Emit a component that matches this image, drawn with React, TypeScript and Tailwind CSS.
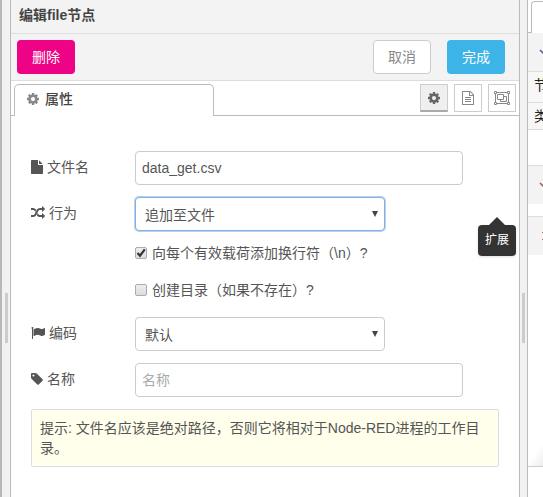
import type { ReactNode } from "react";

const COG =
  "M1152 896q0-106-75-181t-181-75-181 75-75 181 75 181 181 75 181-75 75-181zm512-109v222q0 12-8 23t-20 13l-185 28q-19 54-39 91 35 50 107 138 10 12 10 25t-9 23q-27 37-99 108t-94 71q-12 0-26-9l-138-108q-44 23-91 38-16 136-29 186-7 28-36 28h-222q-14 0-24.5-8.5t-11.5-21.5l-28-184q-49-16-90-37l-141 107q-10 9-25 9-14 0-25-11-126-114-165-168-7-10-7-23 0-12 8-23 15-21 51-66.5t54-70.5q-27-50-41-99l-183-27q-13-2-21-12.5t-8-23.5v-222q0-12 8-23t19-13l186-28q14-46 39-92-40-57-107-138-10-12-10-24 0-10 9-23 26-36 98.5-107.5t94.5-71.5q13 0 26 10l138 107q44-23 91-38 16-136 29-186 7-28 36-28h222q14 0 24.5 8.5t11.5 21.5l28 184q49 16 90 37l142-107q9-9 24-9 13 0 25 10 129 119 165 170 7 8 7 22 0 12-8 23-15 21-51 66.5t-54 70.5q26 50 41 98l183 28q13 2 21 12.5t8 23.5z";
const FILE =
  "M1152 512v-472q22 14 36 28l408 408q14 14 28 36h-472zm-128 32q0 40 28 68t68 28h544v1056q0 40-28 68t-68 28h-1344q-40 0-68-28t-28-68v-1600q0-40 28-68t68-28h800v544z";
const FILE_TEXT =
  "M1596 380q28 28 48 76t20 88v1152q0 40-28 68t-68 28h-1344q-40 0-68-28t-28-68v-1600q0-40 28-68t68-28h896q40 0 88 20t76 48zm-444-244v376h376q-10-29-22-41l-313-313q-12-12-41-22zm384 1528v-1024h-416q-40 0-68-28t-28-68v-416h-768v1536h1280zm-1024-864q0-14 9-23t23-9h704q14 0 23 9t9 23v64q0 14-9 23t-23 9h-704q-14 0-23-9t-9-23v-64zm736 224q14 0 23 9t9 23v64q0 14-9 23t-23 9h-704q-14 0-23-9t-9-23v-64q0-14 9-23t23-9h704zm0 256q14 0 23 9t9 23v64q0 14-9 23t-23 9h-704q-14 0-23-9t-9-23v-64q0-14 9-23t23-9h704z";
const RANDOM =
  "M666 481q-60 92-137 273-22-45-37-72.5t-40.5-63.5-51-56.5-63-35-81.5-14.5h-224q-14 0-23-9t-9-23v-192q0-14 9-23t23-9h224q250 0 410 225zm1126 799q0 14-9 23l-320 320q-9 9-23 9-13 0-22.5-9.5t-9.5-22.5v-192q-32 0-85 .5t-81 1-73-1-71-5-64-10.5-63-18.5-58-28.5-59-40-55-53.5-56-69.5q59-93 136-273 22 45 37 72.5t40.5 63.5 51 56.5 63 35 81.5 14.5h256v-192q0-14 9-23t23-9q12 0 24 10l319 319q9 9 9 23zm0-896q0 14-9 23l-320 320q-9 9-23 9-13 0-22.5-9.5t-9.5-22.5v-192h-256q-48 0-87 15t-69 45-51 61.5-45 77.5q-32 62-78 171-29 66-49.5 111t-54 105-64 100-74 83-90 68.5-106.5 42-128 16.5h-224q-14 0-23-9t-9-23v-192q0-14 9-23t23-9h224q48 0 87-15t69-45 51-61.5 45-77.5q32-62 78-171 29-66 49.5-111t54-105 64-100 74-83 90-68.5 106.5-42 128-16.5h256v-192q0-14 9-23t23-9q12 0 24 10l319 319q9 9 9 23z";
const FLAG =
  "M320 256q0 72-64 110v1266q0 13-9.5 22.5t-22.5 9.5h-64q-13 0-22.5-9.5t-9.5-22.5v-1266q-64-38-64-110 0-53 37.5-90.5t90.5-37.5 90.5 37.5 37.5 90.5zm1472 64v763q0 25-12.5 38.5t-39.5 27.5q-215 116-369 116-61 0-123.5-22t-108.5-48-115.5-48-142.5-22q-192 0-464 146-17 9-33 9-26 0-45-19t-19-45v-742q0-32 31-55 21-14 79-43 236-120 421-120 107 0 200 29t219 88q38 19 88 19 54 0 117.5-21t110-47 88-47 54.5-21q26 0 45 19t19 45z";
const TAG =
  "M576 448q0-53-37.5-90.5t-90.5-37.5-90.5 37.5-37.5 90.5 37.5 90.5 90.5 37.5 90.5-37.5 37.5-90.5zm1067 576q0 53-37 90l-491 492q-39 37-91 37-53 0-90-37l-715-716q-38-37-64.5-101t-26.5-117v-416q0-52 38-90t90-38h416q53 0 117 26.5t102 64.5l715 714q37 39 37 91z";

function Icon({ d, wide = false }: { d: string; wide?: boolean }) {
  return (
    <svg
      aria-hidden="true"
      viewBox={wide ? "0 0 1792 1792" : "128 0 1536 1792"}
      className={wide ? "h-3.5 w-3.5 shrink-0" : "h-3.5 w-3 shrink-0"}
      fill="currentColor"
    >
      <path d={d} />
    </svg>
  );
}

function GroupIcon() {
  return (
    <svg aria-hidden="true" viewBox="0 0 16 14" className="h-3.5 w-4 shrink-0" fill="none" stroke="currentColor">
      <path d="M3 1.5h10M3 12.5h10M1.5 3v8M14.5 3v8" />
      <path d="M.5.5h2v2h-2zM13.5.5h2v2h-2zM.5 11.5h2v2h-2zM13.5 11.5h2v2h-2z" />
      <path d="M3.5 3.5h6v5h-6zM9.5 5.5h3v5h-6v-2" />
    </svg>
  );
}

function Row({ id, icon, label, children }: { id: string; icon: ReactNode; label: string; children: ReactNode }) {
  return (
    <div className="mb-3 flex">
      <label htmlFor={id} className="flex h-8 w-[104px] shrink-0 items-center gap-1">
        {icon}
        {label}
      </label>
      {children}
    </div>
  );
}

function Select({ id, options, focused = false }: { id: string; options: string[]; focused?: boolean }) {
  return (
    <div className="relative w-[250px]">
      <select
        id={id}
        className={
          focused
            ? "h-[34px] w-full appearance-none rounded-[4px] border border-[#86b0df] bg-white px-[9px] pt-0.5 ring-1 ring-[#b5d2f3] outline-none"
            : "h-[34px] w-full appearance-none rounded-[4px] border border-[#ccc] bg-white px-[9px] pt-0.5 outline-none"
        }
      >
        {options.map((o) => (
          <option key={o}>{o}</option>
        ))}
      </select>
      <svg aria-hidden="true" viewBox="0 0 6 6" className="pointer-events-none absolute top-3.5 right-[7px] size-1.5">
        <path d="M0 0h6L3 6z" fill="#444" />
      </svg>
    </div>
  );
}

function Check({ label, checked = false }: { label: string; checked?: boolean }) {
  return (
    <label className="flex h-5 items-center gap-[5px]">
      <span className="grid size-3">
        <input
          type="checkbox"
          defaultChecked={checked}
          className="peer col-start-1 row-start-1 size-3 appearance-none rounded-[2px] border border-[#acacac] bg-linear-to-b from-[#eee] to-[#dcdcdc]"
        />
        <svg
          aria-hidden="true"
          viewBox="0 0 12 12"
          className="pointer-events-none invisible col-start-1 row-start-1 size-3 peer-checked:visible"
          fill="none"
          stroke="#333"
          strokeWidth="2.2"
        >
          <path d="M2.5 6l2.5 2.7L9.8 2.3" />
        </svg>
      </span>
      {label}
    </label>
  );
}

function Chevron({ color }: { color: string }) {
  return (
    <svg aria-hidden="true" viewBox="0 0 10 6" className="h-1.5 w-2.5 shrink-0" fill="none" stroke={color} strokeWidth="1.5">
      <path d="M1 1l4 4 4-4" />
    </svg>
  );
}

function Gutter({ children }: { children?: ReactNode }) {
  return (
    <div className="flex shrink-0 items-center justify-center border-r border-[#bbb] bg-[#f2f2f2] px-[2px] pt-[138px] first-of-type:px-[3px]">
      <div className="h-[50px] w-[3px] bg-[#ccc]" />
      {children}
    </div>
  );
}

function Sidebar() {
  return (
    <aside className="flex w-[15px] shrink-0 flex-col overflow-hidden whitespace-nowrap text-[#444]">
      <div className="flex h-[33px] shrink-0 pt-px">
        <div className="w-[3px] shrink-0 border-b border-[#bbb]" />
        <div className="w-40 shrink-0 rounded-tl-[4px] border-t border-l border-[#bbb]" />
      </div>
      <div className="flex h-[39px] shrink-0 items-center border-b border-[#ddd] bg-[#f3f3f3] pl-[11px]">
        <Chevron color="#4a5f80" />
      </div>
      <div className="flex h-[31px] shrink-0 items-center border-b border-[#ddd] bg-[#f7f7f7] pb-1 pl-1.5 text-[14px] leading-5 text-[#222]">节点</div>
      <div className="flex h-[27px] shrink-0 items-center border-b border-[#ddd] bg-[#f7f7f7] pl-1.5 text-[14px] leading-5 text-[#222]">类型</div>
      <div className="mt-[35px] flex h-[39px] shrink-0 items-center border-t border-[#ddd] bg-[#f3f3f3] pl-[11px]">
        <Chevron color="#8a6250" />
      </div>
      <div className="mt-3 flex h-[39px] shrink-0 items-center border-t border-[#ddd] bg-[#f3f3f3] pl-[13px]">
        <svg aria-hidden="true" viewBox="0 0 6 10" className="h-2.5 w-1.5 shrink-0" fill="none" stroke="#b06a45">
          <path d="M1 1l4 4-4 4" />
        </svg>
      </div>
      <div className="flex-1" />
      <div className="h-5 shrink-0 bg-linear-to-br from-white from-40% to-[#eee]" />
      <div className="h-[31px] shrink-0 border-t border-[#ccc]" />
    </aside>
  );
}

export default function App() {
  return (
    <div className="flex min-h-screen bg-white font-['Liberation_Sans','Noto_Sans_CJK_SC',sans-serif] text-[14px] leading-5 text-[#555]">
      <div className="w-[3px] shrink-0 border-r border-[#f2f2f2] bg-[#b8b8b8]" />
      <Gutter />
      <main className="min-w-0 flex-1 border-r border-[#bbb]">
        <header className="flex h-[34px] items-center border-b border-[#ddd] bg-[#f3f3f3] px-2 pb-1">
          <h1 className="font-bold text-[#444]">编辑file节点</h1>
        </header>
        <div className="flex h-[47px] items-center gap-4 border-b border-[#ddd] bg-[#f3f3f3] pr-3.5 pl-1.5">
          <button type="button" className="h-[34px] w-[58px] rounded-[4px] bg-[#ee0286] text-white">
            删除
          </button>
          <button type="button" className="ml-auto h-[34px] w-[58px] rounded-[4px] border border-[#ccc] bg-white text-[#888]">
            取消
          </button>
          <button type="button" className="h-[34px] w-[58px] rounded-[4px] bg-[#3cb4e7] text-white">
            完成
          </button>
        </div>
        <div className="flex h-[35px]">
          <div className="w-[3px] border-b border-[#bbb]" />
          <div className="mt-[3px] flex w-[200px] items-center gap-1.5 rounded-t-[5px] border border-b-0 border-[#bbb] pb-1 pl-3">
            <span className="flex text-[#888]">
              <Icon d={COG} />
            </span>
            <h2 className="font-medium text-[#444]">属性</h2>
          </div>
          <div className="flex flex-1 items-center justify-end gap-1.5 border-b border-[#bbb] pr-[3px] text-[#888]">
            <button
              type="button"
              aria-label="属性"
              className="flex size-7 items-center justify-center border border-b-2 border-[#ccc] border-b-[#aaa] bg-[#efefef] text-[#666]"
            >
              <Icon d={COG} />
            </button>
            <button type="button" aria-label="描述" className="flex size-7 items-center justify-center border border-[#ccc]">
              <Icon d={FILE_TEXT} />
            </button>
            <button type="button" aria-label="外观" className="flex size-7 items-center justify-center border border-[#ccc]">
              <GroupIcon />
            </button>
          </div>
        </div>
        <form className="relative px-5 pt-[35px]">
          <Row id="filename" icon={<Icon d={FILE} />} label="文件名">
            <input
              id="filename"
              type="text"
              defaultValue="data_get.csv"
              className="h-[34px] w-[70%] rounded-[4px] border border-[#ccc] px-1.5 outline-none"
            />
          </Row>
          <Row id="action" icon={<Icon d={RANDOM} wide />} label="行为">
            <Select id="action" options={["追加至文件", "复写文件", "删除文件"]} focused />
          </Row>
          <div className="mb-[17px] flex flex-col gap-[17px] pl-[104px]">
            <Check label="向每个有效载荷添加换行符（\n）?" checked />
            <Check label="创建目录（如果不存在）?" />
          </div>
          <Row id="encoding" icon={<Icon d={FLAG} wide />} label="编码">
            <Select id="encoding" options={["默认"]} />
          </Row>
          <Row id="name" icon={<Icon d={TAG} />} label="名称">
            <input
              id="name"
              type="text"
              placeholder="名称"
              className="h-[34px] w-[70%] rounded-[4px] border border-[#ccc] px-1.5 outline-none placeholder:text-[#aaa]"
            />
          </Row>
          <p className="rounded-[2px] border border-[#ddd] bg-[#ffffec] p-2">
            提示: 文件名应该是绝对路径，否则它将相对于Node-RED进程的工作目录。
          </p>
          <div
            role="tooltip"
            className="absolute top-[109px] right-[3px] rounded-[4px] bg-[#333] px-[7px] py-[5px] text-[12px] leading-[21px] text-white shadow"
          >
            扩展
            <svg aria-hidden="true" viewBox="0 0 16 8" className="absolute -top-2 left-[11px] h-2 w-4" fill="#333">
              <path d="M0 8l8-8 8 8z" />
            </svg>
          </div>
        </form>
      </main>
      <Gutter />
      <Sidebar />
    </div>
  );
}
